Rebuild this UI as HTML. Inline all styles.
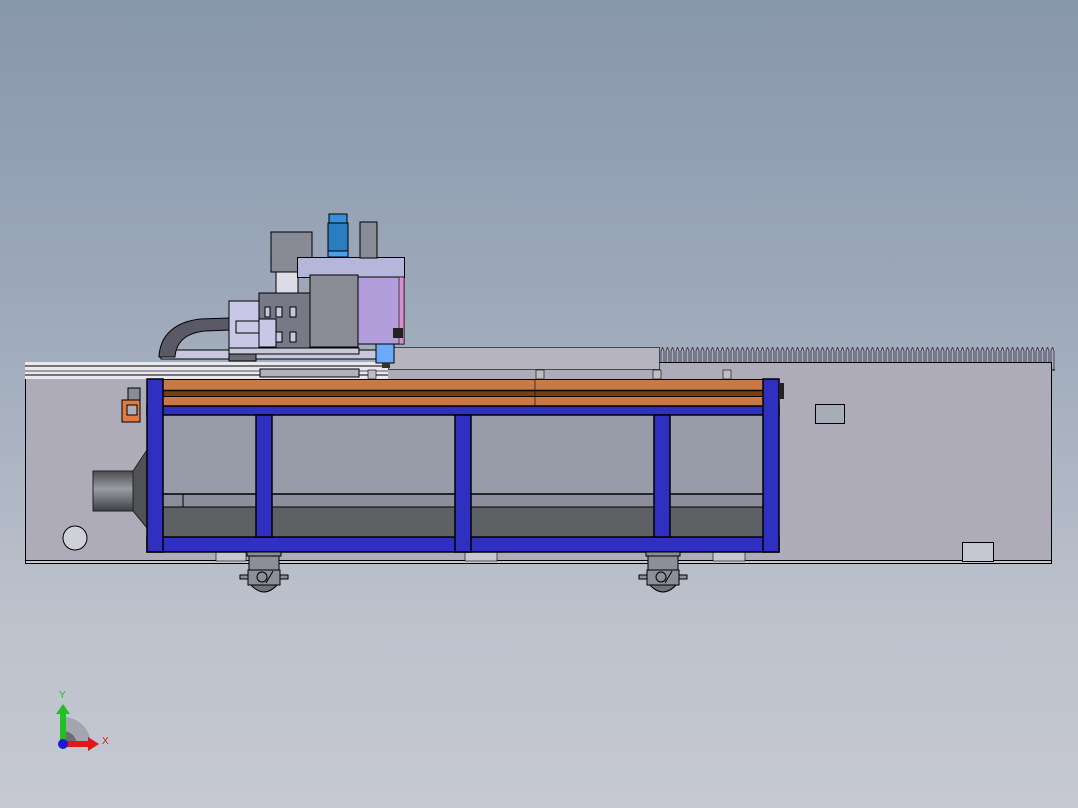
<!DOCTYPE html>
<html><head><meta charset="utf-8"><style>
html,body{margin:0;padding:0;width:1078px;height:808px;overflow:hidden}
body{background:linear-gradient(180deg,#8797ac 0%,#a2adbd 45%,#bcc1cc 75%,#c6c9d3 100%)}
svg{position:absolute;left:0;top:0}
</style></head><body>
<svg width="1078" height="808" viewBox="0 0 1078 808" xmlns="http://www.w3.org/2000/svg">
<defs>
<linearGradient id="cyl" x1="0" y1="0" x2="0" y2="1">
<stop offset="0" stop-color="#4a4c50"/><stop offset="0.45" stop-color="#9a9ca2"/><stop offset="1" stop-color="#3e4044"/></linearGradient>
<pattern id="teeth" x="660" y="347" width="5" height="23" patternUnits="userSpaceOnUse">
<rect width="5" height="23" fill="#a8acbe"/><path d="M1 23 L1 4 L2.5 0 L4 4 L4 23" fill="none" stroke="#3a3a44" stroke-width="0.9"/></pattern>
</defs>
<!-- rack -->
<rect x="660" y="347" width="395" height="23" fill="url(#teeth)"/>
<line x1="660" y1="370" x2="1055" y2="370" stroke="#000"/>
<!-- body -->
<rect x="25.5" y="362.5" width="1026" height="200" fill="#aeacb9" stroke="#000"/>
<rect x="25.5" y="560.5" width="1026" height="3" fill="#c8c8d0" stroke="#000"/>
<rect x="25" y="362" width="363" height="17" fill="#e8e8ee"/>
<line x1="25" y1="366" x2="388" y2="366" stroke="#000"/>
<line x1="25" y1="371" x2="388" y2="371" stroke="#555"/>
<line x1="25" y1="375" x2="388" y2="375" stroke="#000"/>
<rect x="388.5" y="347.5" width="271" height="22" fill="#b6b4bf" stroke="#000" stroke-width="0.6"/>
<rect x="815.5" y="404.5" width="29" height="19" fill="#a6acb8" stroke="#000"/>
<rect x="962.5" y="542.5" width="31" height="19" fill="#c6c6d2" stroke="#000"/>
<rect x="216" y="552" width="30" height="9" fill="#c8c8d2" stroke="#000" stroke-width="0.6"/>
<rect x="465" y="552" width="32" height="9" fill="#c8c8d2" stroke="#000" stroke-width="0.6"/>
<rect x="713" y="552" width="32" height="9" fill="#c8c8d2" stroke="#000" stroke-width="0.6"/>
<circle cx="75" cy="538" r="12" fill="#cfd0d8" stroke="#000"/>
<!-- cone -->
<rect x="93" y="471" width="40" height="40" fill="url(#cyl)" stroke="#222"/>
<path d="M133 471 L147 450 L147 528 L133 511 Z" fill="#505256" stroke="#222"/>
<!-- frame panels -->
<rect x="163" y="415" width="600" height="79" fill="#979ca8"/>
<rect x="163" y="494" width="600" height="13" fill="#8b8e9a"/>
<rect x="163" y="507" width="600" height="30" fill="#5d6164"/>
<line x1="163" y1="494" x2="763" y2="494" stroke="#000" stroke-width="1.5"/>
<line x1="163" y1="507" x2="763" y2="507" stroke="#000"/>
<line x1="183" y1="494" x2="183" y2="507" stroke="#000"/>
<!-- orange beams -->
<rect x="147" y="380" width="632" height="26" fill="#c87a46"/>
<rect x="147" y="391" width="632" height="5" fill="#7a3e10"/>
<line x1="147" y1="390.5" x2="779" y2="390.5" stroke="#000" stroke-width="1.5"/>
<line x1="147" y1="396.5" x2="779" y2="396.5" stroke="#000"/>
<line x1="147" y1="379.5" x2="779" y2="379.5" stroke="#000"/>
<line x1="535" y1="380" x2="535" y2="406" stroke="#000" stroke-width="0.6"/>
<!-- blue -->
<g fill="#3030c0" stroke="#000" stroke-width="1.5">
<rect x="147" y="406" width="632" height="9"/>
<rect x="147" y="537" width="632" height="15"/>
<rect x="147" y="379" width="16" height="173"/>
<rect x="763" y="379" width="16" height="173"/>
<rect x="256" y="415" width="16" height="122"/>
<rect x="455" y="415" width="16" height="137"/>
<rect x="654" y="415" width="16" height="122"/>
</g>
<rect x="779" y="383" width="5" height="16" fill="#222"/>
<!-- left bracket -->
<rect x="122" y="400" width="18" height="22" fill="#e07a40" stroke="#000"/>
<rect x="127" y="405" width="10" height="10" fill="#aeacb9" stroke="#000"/>
<rect x="128" y="388" width="12" height="12" fill="#8a8c94" stroke="#000"/>
<!-- wheels -->
<g stroke="#000" fill="#8c8e98">
<rect x="247" y="552" width="34" height="4"/><rect x="249" y="556" width="30" height="14"/>
<path d="M250 584 Q264 600 278 584 Z" fill="#70727c"/>
<rect x="240" y="575" width="48" height="4"/><rect x="248" y="570" width="32" height="15"/>
<circle cx="262" cy="577" r="5" fill="none"/><line x1="266" y1="583" x2="273" y2="571"/>
<rect x="646" y="552" width="34" height="4"/><rect x="648" y="556" width="30" height="14"/>
<path d="M649 584 Q663 600 677 584 Z" fill="#70727c"/>
<rect x="639" y="575" width="48" height="4"/><rect x="647" y="570" width="32" height="15"/>
<circle cx="661" cy="577" r="5" fill="none"/><line x1="665" y1="583" x2="672" y2="571"/>
</g>
<!-- bolts on beam -->
<g fill="#c0bcc4" stroke="#000" stroke-width="0.6">
<rect x="368" y="370" width="8" height="9"/><rect x="536" y="370" width="8" height="9"/><rect x="653" y="370" width="8" height="9"/><rect x="723" y="370" width="8" height="9"/>
</g>
<!-- gantry -->
<rect x="161" y="350" width="229" height="9" fill="#c8c8dc" stroke="#000"/>
<rect x="260" y="369" width="99" height="8" fill="#b0b0bc" stroke="#000"/>
<path d="M159 357 C160 335 175 322 200 319 L229 318 L229 330 L205 331 C185 333 176 343 175 357 Z" fill="#5a5a66" stroke="#000"/>
<rect x="229" y="301" width="30" height="47" fill="#c8c8e6" stroke="#000"/>
<rect x="236" y="321" width="30" height="12" fill="#c8c8e6" stroke="#000"/>
<rect x="259" y="293" width="53" height="55" fill="#777a86" stroke="#000"/>
<g stroke="#000" fill="#c8c8e6"><rect x="276" y="307" width="6" height="10"/><rect x="290" y="307" width="6" height="10"/><rect x="276" y="332" width="6" height="10"/><rect x="290" y="332" width="6" height="10"/><rect x="265" y="307" width="5" height="10"/></g>
<rect x="259" y="319" width="17" height="28" fill="#c8c8e6" stroke="#000"/>
<rect x="271" y="232" width="41" height="40" fill="#888a96" stroke="#000"/>
<rect x="276" y="272" width="22" height="21" fill="#dcdce8" stroke="#000"/>
<rect x="297.5" y="257.5" width="107" height="20" fill="#b4b6da" stroke="#000"/>
<rect x="358" y="277" width="46" height="67" fill="#b39edc" stroke="#000"/>
<rect x="399" y="277" width="5" height="67" fill="#d890c8" stroke="#000" stroke-width="0.6"/>
<rect x="393" y="328" width="10" height="10" fill="#222"/>
<rect x="310" y="275" width="48" height="72" fill="#8a8c96" stroke="#000"/>
<rect x="229" y="348" width="130" height="6" fill="#c8c8dc" stroke="#000"/>
<rect x="229" y="354" width="27" height="7" fill="#6a6a70" stroke="#000"/>
<rect x="360" y="222" width="17" height="36" fill="#8a8c96" stroke="#000"/>
<rect x="328" y="223" width="20" height="28" fill="#2a7ec0" stroke="#000"/>
<rect x="329" y="214" width="18" height="9" fill="#3a90d8" stroke="#000"/>
<rect x="328" y="251" width="20" height="6" fill="#4aa0f0" stroke="#000"/>
<rect x="376" y="344" width="18" height="19" fill="#6ea8f8" stroke="#000"/>
<rect x="382" y="363" width="8" height="5" fill="#333"/>
<!-- axis triad -->
<path d="M63 717 A28 28 0 0 1 91 745 L63 745 Z" fill="#a2a6ae"/>
<path d="M63 731 A14 14 0 0 1 77 745 L63 745 Z" fill="#6a6e76"/>
<rect x="60" y="712" width="6" height="33" fill="#22c022"/>
<path d="M56 714 L63 704 L70 714 Z" fill="#22c022"/>
<rect x="63" y="741" width="26" height="6" fill="#e01818"/>
<path d="M88 737 L99 744 L88 751 Z" fill="#e01818"/>
<circle cx="63" cy="744" r="5" fill="#1a1ad8"/>
<text x="59" y="698" font-family="Liberation Sans,sans-serif" font-size="10" fill="#22c022">Y</text>
<text x="102" y="744" font-family="Liberation Sans,sans-serif" font-size="10" fill="#e01818">X</text>
</svg>
</body></html>
